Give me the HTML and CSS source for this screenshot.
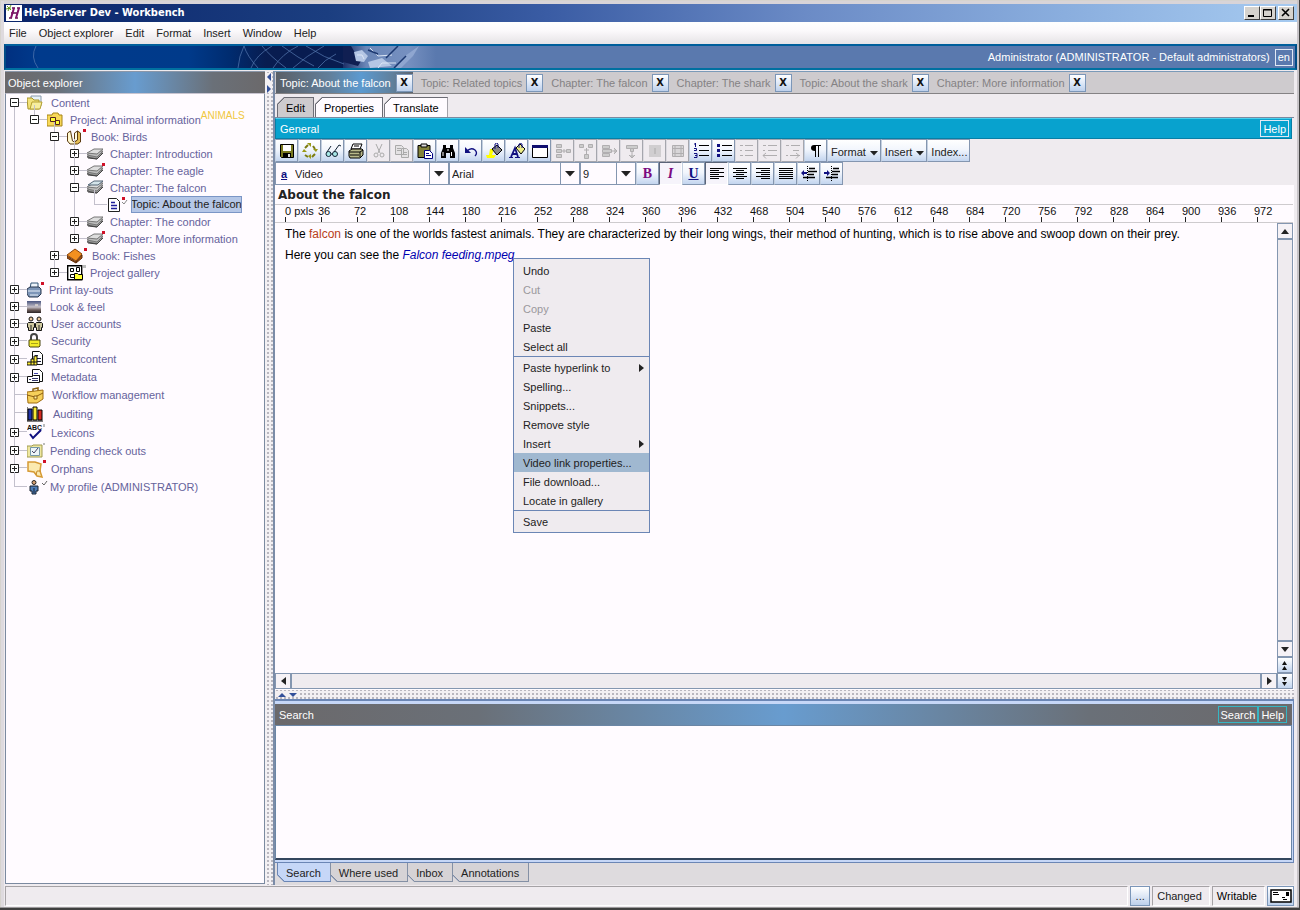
FILE: index.html
```html
<!DOCTYPE html>
<html lang="en">
<head>
<meta charset="utf-8">
<title>HelpServer Dev - Workbench</title>
<link rel="stylesheet" href="styles.css">
</head>
<body>
<svg class="defs" width="0" height="0" aria-hidden="true">
  <symbol id="plus" viewBox="0 0 9 9"><path d="M.5.5h8v8h-8z" fill="#fff" stroke="#222"/><path d="M2 4.5h5M4.5 2v5" stroke="#222"/></symbol>
  <symbol id="minus" viewBox="0 0 9 9"><path d="M.5.5h8v8h-8z" fill="#fff" stroke="#222"/><path d="M2 4.5h5" stroke="#222"/></symbol>
  <symbol id="chapter" viewBox="0 0 23 16"><path d="M0 11l6-4h10l-6 6z" fill="#999" stroke="#555"/><path d="M0 9l6-4h10l-6 6z" fill="#bbb" stroke="#777"/><path d="M0 7l7-4h9l-6 5z" fill="#ddd" stroke="#777"/><path d="M1 12l9 1 6-6" fill="none" stroke="#444"/></symbol>
  <symbol id="down" viewBox="0 0 10 6"><path d="M0 0h10L5 5.500z" fill="#222"/></symbol>
</svg>
<div class="window">
  <header class="titlebar">
    <svg width="16" height="16" viewBox="0 0 16 16"><path d="M0 0h16v16H0z" fill="#fff"/><path d="M1 1l4 4M5 0L2 6M0 4l5-1" stroke="#6a9a20"/><path d="M6 3h3M11 3h3M3 13h3M9 13h3M5 8h6" stroke="#601050" stroke-width="1.500"/><path d="M8 3L5 13M13 3l-3 10" stroke="#80106a" stroke-width="2"/></svg>
    <h1>HelpServer Dev - Workbench</h1>
    <div class="winbtns">
      <button aria-label="Minimize"><svg width="12" height="10"><path d="M2 8h6" stroke="#000" stroke-width="2"/></svg></button>
      <button aria-label="Maximize"><svg width="12" height="10"><path d="M1.500 1.500h8v7h-8zM1 2h9" fill="none" stroke="#000"/></svg></button>
      <button aria-label="Close" class="gap"><svg width="12" height="10"><path d="M2 1l7 7M9 1L2 8" stroke="#000" stroke-width="1.600"/></svg></button>
    </div>
  </header>
  <nav class="menubar">
    <button>File</button><button>Object explorer</button><button>Edit</button><button>Format</button><button>Insert</button><button>Window</button><button>Help</button>
  </nav>
  <div class="banner">
    <svg class="art" width="430" height="22" viewBox="0 0 430 22" aria-hidden="true">
      <defs>
        <linearGradient id="bg"><stop offset="0" stop-color="#003080"/><stop offset=".1" stop-color="#003a8c"/><stop offset=".54" stop-color="#003a8a"/><stop offset=".66" stop-color="#002c70"/><stop offset=".77" stop-color="#081c50"/></linearGradient>
        <linearGradient id="hand"><stop offset="0" stop-color="#1c2f66"/><stop offset=".25" stop-color="#6b87b8"/><stop offset=".7" stop-color="#7690c0"/><stop offset="1" stop-color="#5a79ae"/></linearGradient>
      </defs>
      <path d="M0 0h338v22H0z" fill="url(#bg)"/>
      <path d="M337 0h93v22h-93z" fill="url(#hand)"/>
      <path d="M30 0q-6 11 2 22M238 0q-5 10-6 22M266 0q-16 9-21 22M292 0q-16 8-25 22M318 0q-18 10-31 22M330 8q-12 6-18 14M238 0q3 10 14 22M256 0q8 10 24 22M276 0q16 12 32 20M300 0q18 12 38 18" fill="none" stroke="#5579b0" stroke-opacity=".7"/>
      <path d="M337 0h8l6 10 4 5-3 5-15-4z" fill="#101f52"/>
      <path d="M348 6l8-2 6 6-4 6-8-1zM362 16l14-4 10 8-22 2z" fill="#b4c6e4"/>
      <path d="M351 9l5 0 2 4M364 2l8 8 14-1M372 22l4-5 14 0" fill="none" stroke="#dce6f5"/>
      <path d="M389 22l10-12 14-10-6 10-12 12z" fill="#8fa6d0"/>
      <path d="M380 12l12-12M388 22l12-12M362 4l10 4" fill="none" stroke="#1c3870" stroke-width="1.500"/>
    </svg>
    <span class="who">Administrator (ADMINISTRATOR - Default administrators)</span>
    <button class="boxed">en</button>
  </div>
  <main class="main">
    <section class="explorer">
      <h2 class="shine">Object explorer</h2>
      <div class="treebox">
      <ul class="tree">
        <li><div class="row"><svg class="tg"><use href="#minus"/></svg><svg width="24" height="16"><path d="M4 1h10v10H4z" fill="#e8f2fa" stroke="#89a"/><path d="M0 3h5l2 2h5v9H1z" fill="#f3e27a" stroke="#a8952c"/><path d="M3 14l2-7h10l-2 7z" fill="#f7ee9e" stroke="#b5a030"/></svg><span>Content</span></div>
        <ul>
          <li><div class="row"><svg class="tg"><use href="#minus"/></svg><svg width="23" height="16"><path d="M0 3h5l1-2h5l1 2h3v11H0z" fill="#f8d858" stroke="#a68418"/><path d="M3.500 5.500h5v4h-5zM8.500 8.500h4v4h-4z" fill="#ff3" stroke="#522"/></svg><span>Project: Animal information</span><sup>ANIMALS</sup></div>
          <ul>
            <li><div class="row"><svg class="tg"><use href="#minus"/></svg><svg width="24" height="16"><path d="M.500 4l3-2 2 10 2 1v2H3L.500 12z" fill="#fff8d0" stroke="#5a3a10"/><path d="M7.500 13V4l3-2v9z" fill="#fffbe4" stroke="#5a3a10"/><path d="M10.500 2l3 2v9l-3 2h-3v-2l3-2z" fill="#e6bf55" stroke="#5a3a10"/><path d="M16 0h3v3h-3z" fill="#d01028"/></svg><span>Book: Birds</span></div>
            <ul>
              <li><div class="row"><svg class="tg"><use href="#plus"/></svg><svg width="23" height="16"><use href="#chapter"/></svg><span>Chapter: Introduction</span></div></li>
              <li><div class="row"><svg class="tg"><use href="#plus"/></svg><svg width="23" height="16"><use href="#chapter"/><path d="M15 0h3v3h-3z" fill="#d01028"/></svg><span>Chapter: The eagle</span></div></li>
              <li><div class="row"><svg class="tg"><use href="#minus"/></svg><svg width="23" height="16"><use href="#chapter"/><path d="M1 5l6-4h9l-5 4z" fill="#d4e4ea" stroke="#567"/></svg><span>Chapter: The falcon</span></div>
              <ul>
                <li><div class="row leaf"><svg width="23" height="16"><path d="M.500 1.500h8l3 3v10h-11z" fill="#fff" stroke="#222"/><path d="M3 5.500h4M3 8.500h6M3 11.500h6" stroke="#20209a" stroke-width="1.500"/><path d="M14 0h3v3h-3z" fill="#d01028"/><path d="M14 5l2 2 3-4" fill="none" stroke="#888"/></svg><span class="sel">Topic: About the falcon</span></div></li>
              </ul></li>
              <li><div class="row"><svg class="tg"><use href="#plus"/></svg><svg width="23" height="16"><use href="#chapter"/></svg><span>Chapter: The condor</span></div></li>
              <li><div class="row"><svg class="tg"><use href="#plus"/></svg><svg width="23" height="16"><use href="#chapter"/><path d="M15 0h3v3h-3z" fill="#d01028"/></svg><span>Chapter: More information</span></div></li>
            </ul></li>
            <li><div class="row"><svg class="tg"><use href="#plus"/></svg><svg width="25" height="16"><path d="M0 7l8-6 7 5-6 7z" fill="#f49020" stroke="#8a4208"/><path d="M0 8l9 6 6-7v3l-6 5-9-5z" fill="#b85408" stroke="#5a2a06"/><path d="M17 0h3v3h-3z" fill="#d01028"/></svg><span>Book: Fishes</span></div></li>
            <li><div class="row"><svg class="tg"><use href="#plus"/></svg><svg width="23" height="16"><path d="M.700.700h14v14h-14z" fill="#fff" stroke="#000" stroke-width="1.400"/><path d="M3.500 3.500h3v3h-3zM3.500 9.500h4v3h-4zM9.500 2.500h3v4h-3z" fill="#fff" stroke="#000"/><path d="M7.500 8.500h3l1 1h4v5h-8z" fill="#ff3" stroke="#000"/><path d="M16 0h3v3h-3z" fill="#bbb"/></svg><span>Project gallery</span></div></li>
          </ul></li>
        </ul></li>
        <li><div class="row"><svg class="tg"><use href="#plus"/></svg><svg width="22" height="16"><path d="M4 1h7v6H3z" fill="#eef4fb" stroke="#357"/><path d="M0 7l3-2h9l2 2v5l-3 3H2l-2-3z" fill="#7d95b8" stroke="#2a3850"/><path d="M1 9h12M3 13h8" stroke="#e8eef8"/><path d="M14 0h3v3h-3z" fill="#d01028"/></svg><span>Print lay-outs</span></div></li>
        <li><div class="row"><svg class="tg"><use href="#plus"/></svg><svg width="23" height="14"><defs><linearGradient id="sky" x2="0" y2="1"><stop offset="0" stop-color="#4a5580"/><stop offset=".5" stop-color="#c6c0c8"/><stop offset=".75" stop-color="#6a5a58"/><stop offset="1" stop-color="#2a2226"/></linearGradient></defs><path d="M0 1h14v12H0z" fill="url(#sky)"/><path d="M8 5h3" stroke="#fff3dd"/></svg><span>Look &amp; feel</span></div></li>
        <li><div class="row"><svg class="tg"><use href="#plus"/></svg><svg width="24" height="16"><g stroke="#111"><circle cx="4" cy="3" r="2" fill="#eec9a0"/><circle cx="12" cy="3" r="2" fill="#eec9a0"/><path d="M1.500 6.500h5l1 1v4h-1v3h-5v-3h-1v-4zM9.500 6.500h5l1 1v4h-1v3h-5v-3h-1v-4z" fill="#d0c8a0"/></g><path d="M4 9v6M12 9v6" stroke="#222"/></svg><span>User accounts</span></div></li>
        <li><div class="row r18"><svg class="tg"><use href="#plus"/></svg><svg width="24" height="16"><path d="M4 8V4q0-3 3-3t3 3v4" fill="none" stroke="#444" stroke-width="2"/><path d="M2 7h11v6l-1 1H3l-1-1z" fill="#f4ec28" stroke="#4a4610"/><path d="M4 10.500h7" stroke="#a8a018"/></svg><span>Security</span></div></li>
        <li><div class="row r18"><svg class="tg"><use href="#plus"/></svg><svg width="24" height="16"><path d="M5.500.500h7l3 3v10h-10z" fill="#fff" stroke="#111"/><path d="M8 4.500h3M8 7.500h6M10 10.500h4" stroke="#224"/><path d="M0 11h4V8h3V5h3v9H0z" fill="#fe3" stroke="#111"/><path d="M4 11h6M7 8v6M4 11v3" stroke="#111"/></svg><span>Smartcontent</span></div></li>
        <li><div class="row r18"><svg class="tg"><use href="#plus"/></svg><svg width="24" height="16"><path d="M5.500.500h7l3 3v9h-10z" fill="#fff" stroke="#111"/><path d="M7 4.500h4M7 6.500h6" stroke="#44a"/><path d="M.500 7.500h5l1-1h6v7H.500z" fill="#fff" stroke="#111"/><path d="M2 10.500h2M5 9.500h6M5 11.500h6" stroke="#336"/></svg><span>Metadata</span></div></li>
        <li><div class="row r18 bare"><svg width="25" height="17"><path d="M6 5V2l5-1v3" fill="none" stroke="#8a6010" stroke-width="1.500"/><path d="M0 5l16-2v9l-6 4H1z" fill="#f6cf5a" stroke="#a06c10"/><path d="M0 8l8 2 8-4" fill="none" stroke="#8a5c10"/><path d="M7 9h3v3H7z" fill="#fff0a0" stroke="#8a5c10"/></svg><span>Workflow management</span></div></li>
        <li><div class="row r19 bare"><svg width="26" height="16"><path d="M1 3h4v11H1z" fill="#2233aa" stroke="#000"/><path d="M6 1h4v13H6z" fill="#f8e838" stroke="#000"/><path d="M11 4h4v10h-4z" fill="#d42a20" stroke="#000"/><path d="M0 1v14h16" fill="none" stroke="#000"/></svg><span>Auditing</span></div></li>
        <li><div class="row r19"><svg class="tg"><use href="#plus"/></svg><svg width="24" height="18" viewBox="0 0 24 18"><text x="0" y="6" class="abc">ABC</text><path d="M3 10l3 4 8-8" fill="none" stroke="#101080" stroke-width="2"/><path d="M16 0h2v3h-2z" fill="#bbb"/></svg><span>Lexicons</span></div></li>
        <li><div class="row"><svg class="tg"><use href="#plus"/></svg><svg width="23" height="16"><path d="M0 3h5l1-1h9v12H0z" fill="#efe7a0" stroke="#a09a50"/><path d="M3.500 4.500h9v8h-9z" fill="#eef4f8" stroke="#79a"/><path d="M5 8l2 2 4-5" fill="none" stroke="#446"/><path d="M16 0h2v2h-2z" fill="#bbb"/></svg><span>Pending check outs</span></div></li>
        <li><div class="row r19"><svg class="tg"><use href="#plus"/></svg><svg width="24" height="18"><path d="M1 2h7l6 2-1 7 2 6-5-1-3-4-6-1z" fill="#fbeab0" stroke="#d69a34" stroke-width="1.500"/><path d="M9 15l1-4 4 0" fill="none" stroke="#c88a28"/><path d="M16 0h3v3h-3z" fill="#d01028"/></svg><span>Orphans</span></div></li>
        <li><div class="row r18 bare"><svg width="23" height="16"><circle cx="7" cy="3.500" r="2" fill="#d9a070" stroke="#222"/><path d="M3 7h8v5H9v3H5v-3H3z" fill="#4d7db8" stroke="#16202e"/><path d="M7 9v5" stroke="#16202e"/><path d="M15 4l2 2 3-4" fill="none" stroke="#666"/></svg><span>My profile (ADMINISTRATOR)</span></div></li>
      </ul>
      </div>
    </section>
    <div class="vsplit"><svg width="6" height="20"><path d="M5 0v8L1 4z" fill="#33509a"/><path d="M1 12v8l4-4z" fill="#33509a"/></svg></div>
    <section class="work">
      <div class="doctabs">
        <div class="dt on"><span>Topic: About the falcon</span><button aria-label="Close tab">X</button></div>
        <div class="dt"><span>Topic: Related topics</span><button aria-label="Close tab">X</button></div>
        <div class="dt"><span>Chapter: The falcon</span><button aria-label="Close tab">X</button></div>
        <div class="dt"><span>Chapter: The shark</span><button aria-label="Close tab">X</button></div>
        <div class="dt"><span>Topic: About the shark</span><button aria-label="Close tab">X</button></div>
        <div class="dt"><span>Chapter: More information</span><button aria-label="Close tab">X</button></div>
      </div>
      <div class="subtabs"><button class="on">Edit</button><button>Properties</button><button>Translate</button></div>
      <div class="general"><h2>General</h2><button class="boxed">Help</button></div>
      <div class="toolbar">
        <button aria-label="Save"><svg class="i"><path d="M1.500 1.500h13v13h-12l-1-1z" fill="#7a7a20" stroke="#000"/><path d="M4 2h8v6H4z" fill="#fff"/><path d="M4 10h8v4H4z" fill="#000"/><path d="M9 11h2v3H9z" fill="#ddd"/></svg></button>
        <button aria-label="Refresh"><svg class="i"><g fill="none" stroke="#7c7c10" stroke-width="2"><path d="M3 5l3-3M11 3l2 3M13 11l-3 3M6 14l-3-2"/></g><path d="M5 0h4v4zM11 6h5l-2 3zM9 11v5l-3-3zM0 9l2-3 3 3z" fill="#9a9a18"/></svg></button>
        <button aria-label="Preview"><svg class="i"><g fill="#a8e8e8" stroke="#123"><circle cx="3.500" cy="11" r="2.500"/><circle cx="10" cy="11" r="2.500"/></g><path d="M2 9l4-6M9 9l5-7 2 1M6 11h2" fill="none" stroke="#123"/></svg></button>
        <button aria-label="Print"><svg class="i"><path d="M5 1h9l-2 5H3z" fill="#fff" stroke="#000"/><path d="M1 8l3-2h10l1 1v5l-3 3H2l-1-2z" fill="#b9b98a" stroke="#000"/><path d="M1 9h11l3-2M2 12h9M6 3h5M12 9v5" fill="none" stroke="#000"/></svg></button>
        <button disabled aria-label="Cut"><svg class="i"><path d="M5 1l4 9M11 1L7 10" stroke="#aaa"/><circle cx="5" cy="12" r="2" fill="none" stroke="#aaa"/><circle cx="11" cy="12" r="2" fill="none" stroke="#aaa"/></svg></button>
        <button disabled aria-label="Copy"><svg class="i"><path d="M1.500 2.500h6l2 2v7h-8zM7.500 5.500h5l2 2v7h-7z" fill="#e4e2e4" stroke="#aaa"/><path d="M3 5.500h4M3 7.500h4M9 9.500h4M9 11.500h4" stroke="#aaa"/></svg></button>
        <button aria-label="Paste"><svg class="i"><path d="M1 2.500h12v12H1z" fill="#82823c" stroke="#000"/><path d="M4 1h6v3H4z" fill="#ddd" stroke="#000"/><path d="M7.500 7.500h5l3 3v5h-8z" fill="#fff" stroke="#000080"/><path d="M9 10.500h3M9 12.500h5" stroke="#000080"/></svg></button>
        <button aria-label="Find"><svg class="i"><path d="M3 2h3v3h4V2h3v3l2 5v5h-5v-5H6v5H1v-5l2-5z" fill="#000"/><path d="M3 9v4M11.500 9v4M8 6v2" stroke="#fff"/></svg></button>
        <button aria-label="Undo"><svg class="i"><path d="M4 8q4-4 8-1 3 3 0 6" fill="none" stroke="#101080" stroke-width="1.300"/><path d="M2 4v6h6z" fill="#101080"/></svg></button>
        <button aria-label="Highlight"><svg class="i"><path d="M0 12h3l1-6h4l-2 6h4l-2 3H1z" fill="#ff0"/><path d="M6 6l5-4 5 5-5 5z" fill="#888" stroke="#000"/><path d="M9 6V1q2-2 3 0v4" fill="none" stroke="#101080"/></svg></button>
        <button aria-label="Font color"><svg class="i"><path d="M0 14.500h4M6 14.500h5" stroke="#101080"/><path d="M2 14L6 5l3 9M3 11h5" fill="none" stroke="#101080" stroke-width="1.800"/><path d="M7 5l4-4 5 5-4 5z" fill="#ee8" stroke="#000"/><path d="M10 5V1q2-1 3 0v4" fill="none" stroke="#101080"/></svg></button>
        <button aria-label="Table"><svg class="i"><path d="M.500 2.500h15v12H.500z" fill="#fff" stroke="#000"/><path d="M0 3.500h16" stroke="#101070" stroke-width="3"/></svg></button>
        <button disabled aria-label="Column left"><svg class="i"><path d="M1.500 1.500h5v3h-5zM1.500 6.500h5v3h-5zM1.500 11.500h5v3h-5zM11.500 6.500h4v3h-4zM7 8h4M9 6v4" fill="#ccc" stroke="#b0aeb0"/></svg></button>
        <button disabled aria-label="Row above"><svg class="i"><path d="M1.500 1.500h4v3h-4zM10.500 1.500h4v3h-4zM6.500 11.500h4v4h-4zM8.500 5v6M6 7h5" fill="#ccc" stroke="#b0aeb0"/></svg></button>
        <button disabled aria-label="Column right"><svg class="i"><path d="M1.500 2.500h7v3h-7zM1.500 6.500h9v3h-9zM1.500 10.500h7v3h-7zM10 8h6M13 5l3 3-3 3" fill="#ccc" stroke="#b0aeb0"/></svg></button>
        <button disabled aria-label="Row below"><svg class="i"><path d="M2.500 2.500h11v3h-11zM6.500 5.500h3v3h-3zM8 8v7M5 12l3 3 3-3" fill="#ccc" stroke="#b0aeb0"/></svg></button>
        <button disabled aria-label="Split"><svg class="i"><path d="M2 2h12v12H2z" fill="#d0ced0"/><path d="M8 5v6" stroke="#aaa"/></svg></button>
        <button disabled aria-label="Merge"><svg class="i"><path d="M2.500 2.500h11v11h-11zM2 5.500h12M2 10.500h12M5 2v12M11 2v12" fill="#d8d6d8" stroke="#b0aeb0"/></svg></button>
        <button aria-label="Numbered list"><svg class="i"><path d="M6 2.500h10M6 7.500h10M6 12.500h10" stroke="#000"/><path d="M2.500 0v4M1 1h2M1 5.500h2.500v2H1M1 10.500h3v4H1M2 12.500h2" fill="none" stroke="#101080"/></svg></button>
        <button aria-label="Bulleted list"><svg class="i"><path d="M6 2.500h10M6 7.500h10M6 12.500h10" stroke="#000"/><path d="M1 1h3v3H1zM1 6h3v3H1zM1 11h3v3H1z" fill="#101080"/></svg></button>
        <button disabled aria-label="List"><svg class="i"><path d="M6 2.500h8M6 7.500h8M6 12.500h8M1 2.500h3M1 7.500h2M1 12.500h3" stroke="#b0aeb0"/></svg></button>
        <button disabled aria-label="Outdent item"><svg class="i"><path d="M6 2.500h9M6 7.500h9M1 2.500h3M1 7.500h2M1 12.500h14M4 10l-3 2.500 3 3" fill="none" stroke="#b0aeb0"/></svg></button>
        <button disabled aria-label="Indent item"><svg class="i"><path d="M6 2.500h9M8 7.500h6M1 2.500h3M1 12.500h2M5 12.500h10M11 10l3 2.500-3 3" fill="none" stroke="#b0aeb0"/></svg></button>
        <button aria-label="Paragraph marks"><svg class="i"><path d="M13 2.500H6M7.500 2v12M10.500 2v12" fill="none" stroke="#000"/><path d="M8 2H6Q3 2 3 5t4 3h1z"/></svg></button>
        <button class="txt">Format<svg width="8" height="5"><path d="M0 0h8L4 4.500z" fill="#222"/></svg></button>
        <button class="txt">Insert<svg width="8" height="5"><path d="M0 0h8L4 4.500z" fill="#222"/></svg></button>
        <button class="txt">Index...</button>
      </div>
      <div class="toolbar">
        <div class="combo c1"><b>a</b><select aria-label="Style"><option>Video</option></select><i><svg width="10" height="6"><use href="#down"/></svg></i></div>
        <div class="combo c2"><select aria-label="Font"><option>Arial</option></select><i><svg width="10" height="6"><use href="#down"/></svg></i></div>
        <div class="combo c3"><select aria-label="Size"><option>9</option></select><i><svg width="10" height="6"><use href="#down"/></svg></i></div>
        <button class="ser b">B</button><button class="ser it on">I</button><button class="ser u">U</button>
        <button class="on" aria-label="Align left"><svg class="i"><path d="M1 2.500h14M1 4.500h9M1 6.500h14M1 8.500h9M1 10.500h14M1 12.500h9" stroke="#000"/></svg></button>
        <button aria-label="Center"><svg class="i"><path d="M1 2.500h14M4 4.500h8M1 6.500h14M4 8.500h8M1 10.500h14M4 12.500h8" stroke="#000"/></svg></button>
        <button aria-label="Align right"><svg class="i"><path d="M1 2.500h14M6 4.500h9M1 6.500h14M6 8.500h9M1 10.500h14M6 12.500h9" stroke="#000"/></svg></button>
        <button aria-label="Justify"><svg class="i"><path d="M1 2.500h14M1 4.500h14M1 6.500h14M1 8.500h14M1 10.500h14M1 12.500h14" stroke="#000"/></svg></button>
        <button aria-label="Outdent"><svg class="i"><path d="M8 2.500h6M7 5.500h9M7 8.500h6M2 11.500h12" stroke="#000" stroke-width="1.500"/><path d="M6.500 0v16" stroke="#000" stroke-dasharray="1 1"/><path d="M0 7l3-3v2h3v2H3v2z" fill="#101080"/></svg></button>
        <button aria-label="Indent"><svg class="i"><path d="M9 2.500h6M8 5.500h8M8 8.500h6M2 11.500h12" stroke="#000" stroke-width="1.500"/><path d="M7.500 0v16" stroke="#000" stroke-dasharray="1 1"/><path d="M6 7L3 4v2H0v2h3v2z" fill="#101080"/></svg></button>
      </div>
      <div class="editor">
        <h3>About the falcon</h3>
        <div class="ruler"><span>0 pxls</span><span>36</span><span>72</span><span>108</span><span>144</span><span>180</span><span>216</span><span>252</span><span>288</span><span>324</span><span>360</span><span>396</span><span>432</span><span>468</span><span>504</span><span>540</span><span>576</span><span>612</span><span>648</span><span>684</span><span>720</span><span>756</span><span>792</span><span>828</span><span>864</span><span>900</span><span>936</span><span>972</span></div>
        <div class="page">
          <article class="doc">
            <p>The <span class="term">falcon</span> is one of the worlds fastest animals. They are characterized by their long wings, their method of hunting, which is to rise above and swoop down on their prey.</p>
            <p>Here you can see the <a class="vid" href="#">Falcon feeding.mpeg</a></p>
          </article>
          <div class="vbar">
            <button aria-label="Scroll up"><svg width="8" height="5"><path d="M0 5h8L4 0z" fill="#222"/></svg></button>
            <span class="track"></span>
            <button aria-label="Scroll down"><svg width="8" height="5"><path d="M0 0h8L4 5z" fill="#222"/></svg></button>
            <button class="blue" aria-label="Page up"><svg width="8" height="9"><path d="M1 4h5L3.500 0zM1 9h5L3.500 5z" fill="#111"/></svg></button>
          </div>
        </div>
        <div class="hbar">
          <button aria-label="Scroll left"><svg width="5" height="8"><path d="M5 0v8L0 4z" fill="#222"/></svg></button>
          <span class="track"></span>
          <button aria-label="Scroll right"><svg width="5" height="8"><path d="M0 0v8l5-4z" fill="#222"/></svg></button>
          <button class="blue" aria-label="Page down"><svg width="8" height="9"><path d="M1 0h5L3.500 4zM1 5h5L3.500 9z" fill="#111"/></svg></button>
        </div>
      </div>
      <div class="hsplit"><svg width="24" height="5"><path d="M3 5h8L7 1z" fill="#33509a"/><path d="M14 1h8l-4 4z" fill="#33509a"/></svg></div>
      <div class="search">
        <div class="shine shead"><h2>Search</h2><button class="boxed">Search</button><button class="boxed">Help</button></div>
        <div class="results"></div>
      </div>
      <div class="bottomtabs"><button class="on">Search</button><button>Where used</button><button>Inbox</button><button>Annotations</button></div>
    </section>
  </main>
  <footer class="status">
    <span class="msg"></span><button class="dots">...</button><span class="cell">Changed</span><span class="cell dark">Writable</span>
    <button class="mail" aria-label="Messages"><svg width="22" height="14"><path d="M1 1h20v12H1z" fill="#fff" stroke="#000" stroke-width="1.500"/><path d="M3 3.500h5M3 5.500h6M12 8.500h3M13 10.500h4" stroke="#000"/><path d="M16 3h3v4h-3z"/></svg></button>
  </footer>
  <div class="ctx" role="menu">
    <button>Undo</button><button disabled>Cut</button><button disabled>Copy</button><button>Paste</button><button>Select all</button>
    <hr>
    <button>Paste hyperlink to<svg width="5" height="8"><path d="M0 0v8l5-4z" fill="#222"/></svg></button><button>Spelling...</button><button>Snippets...</button><button>Remove style</button><button>Insert<svg width="5" height="8"><path d="M0 0v8l5-4z" fill="#222"/></svg></button><button class="hot">Video link properties...</button><button>File download...</button><button>Locate in gallery</button>
    <hr>
    <button>Save</button>
  </div>
</div>
</body>
</html>
```

FILE: styles.css
```css
* { box-sizing: border-box; }
body { margin: 0; font: 11px/14px "Liberation Sans", Arial, sans-serif; color: #222; background: #efebef; }
button, select { font: inherit; color: inherit; margin: 0; padding: 0; border: 0; background: none; border-radius: 0; }
h1, h2, h3, p, ul { margin: 0; padding: 0; font-size: inherit; font-weight: normal; }
svg { display: block; flex: none; }
.defs { position: absolute; }

.window { position: relative; display: flex; flex-direction: column; height: 100vh; padding: 4px 3px 3px 4px; background: #efebef; box-shadow: inset -1px -2px #404040, inset 0 -3px #9a989a, inset -3px 0 #c8c4c8, inset 1px 0 #d6d3ce, inset 0 1px #d6d3ce, inset 4px 0 #dedade, inset 0 4px #d8d4d8; }

.titlebar { display: flex; align-items: center; gap: 2px; height: 18px; flex: none; padding: 0 3px 0 2px; background: linear-gradient(90deg, #0a246a, #1b3e80 25%, #3a5ca4 42%, #6b8bc6 62%, #8aaede 82%, #a6caf0); color: #fff; }
.titlebar h1 { flex: 1; font: bold 11px/16px "DejaVu Sans Condensed", Tahoma, sans-serif; }
.winbtns { display: flex; }
.winbtns button { display: grid; place-items: center; width: 16px; height: 14px; background: #d6d3ce; border: 1px solid; border-color: #fff #404040 #404040 #fff; }
.winbtns .gap { margin-left: 2px; }

.menubar { display: flex; gap: 12px; flex: none; height: 22px; padding: 0 5px; background: linear-gradient(#fff, #fbf9fb 40%, #e6e3e6); }

.banner { display: flex; align-items: center; gap: 5px; flex: none; height: 26px; padding: 0 2px 0 0; border: 2px solid #004c86; border-color: #005f9c #004c86 #0070a0; background: #5a79ae; color: #fff; }
.banner .art { align-self: stretch; height: 22px; }
.who { flex: 1; text-align: right; }
.boxed { height: 17px; padding: 0 2px; border: 1px solid #e0e8f4; color: #fff; line-height: 14px; }

.main { display: flex; flex: 1; min-height: 0; padding: 1px 3px 0 1px; }
.explorer { display: flex; flex-direction: column; width: 260px; flex: none; border-top: 1px solid #8a96a8; }
.shine { background: linear-gradient(90deg, #6b696b, #6a7078 20%, #689ccf 50%, #6a7078 80%, #6b696b); color: #fff; }
.explorer h2 { flex: none; height: 21px; padding: 4px 3px; }
.treebox { flex: 1; padding: 0 4px; background: #fffbff; border: 1px solid #7b8aa0; border-top-color: #c8c4d0; margin-bottom: 1px; }
.tree, .tree ul { list-style: none; }
.tree ul { padding-left: 20px; }
.tree li { position: relative; }
.tree li::before { content: ""; position: absolute; left: 4px; top: -6px; bottom: 0; width: 1px; background: #c3c0cc; }
.tree > li:first-child::before { top: 8px; }
.tree li:last-child::before { bottom: auto; height: 15px; }
.row { position: relative; display: flex; align-items: center; height: 17px; white-space: nowrap; color: #66639c; }
.r18 { height: 18px; }
.r19 { height: 19px; }
.row::before { content: ""; position: absolute; left: 5px; top: 8px; width: 12px; height: 1px; background: #c3c0cc; }
.tg { width: 9px; height: 9px; margin-right: 8px; position: relative; }
.bare { padding-left: 17px; }
.leaf { padding-left: 18px; }
.row sup { align-self: flex-start; font-size: 10px; line-height: 10px; color: #f0c840; }
.sel { height: 17px; outline: 1px solid #7b96c6; outline-offset: -1px; background: #b5c7e7; color: #222; line-height: 17px; }
.abc { font: bold 7px "Liberation Sans", sans-serif; fill: #111; }

.vsplit { width: 8px; flex: none; padding: 2px 1px; background: radial-gradient(circle at 2px 2px, #a4a2ac 0.6px, #f3f0f3 1px) 1px 0 / 4px 4px; }
.vsplit svg { background: #f3f0f3; }
.work { display: flex; flex-direction: column; flex: 1; min-width: 0; border-left: 2px solid #7b8ca8; border-top: 1px solid #7b9ab8; }

.doctabs { display: flex; align-items: center; flex: none; height: 22px; padding-left: 1px; gap: 8px; background: #cecbce; border-bottom: 1px solid #848284; color: #848284; overflow: hidden; white-space: nowrap; }
.dt { display: flex; align-items: center; gap: 4px; height: 21px; }
.dt button { width: 17px; height: 18px; border: 1px solid #7b96b8; background: linear-gradient(#fff, #dfe9f8 50%, #bdd0ec); color: #111; font: bold 11px/14px "DejaVu Sans Condensed", sans-serif; }
.dt.on { gap: 5px; padding-left: 4px; background: linear-gradient(90deg, #5a6068, #62809c 40%, #5c9ad0 62%, #60809c 85%, #5c646e); color: #fff; }

.subtabs { display: flex; align-items: flex-end; gap: 1px; flex: none; height: 24px; padding: 0 2px; border-bottom: 1px solid #7b8aa0; }
.subtabs button { height: 20px; padding: 0 8px; border: 1px solid #6b6b73; border-bottom: 0; color: #000; clip-path: polygon(7px 0, 100% 0, 100% 100%, 0 100%, 0 7px); background: linear-gradient(135deg, #6b6b73 6px, #fffbff 6px) border-box; }
.subtabs .on { background: linear-gradient(135deg, #6b6b73 6px, #cecbce 6px) border-box; }

.general { display: flex; align-items: center; flex: none; height: 21px; margin-right: 2px; padding: 0 2px 0 4px; background: #08a2ce; border: 1px solid #087fa6; border-top-color: #4ad0ee; color: #fff; }
.general h2 { flex: 1; }

.toolbar { display: flex; flex: none; height: 23px; }
.toolbar button { display: grid; place-items: center; width: 23px; height: 23px; border: 1px solid #8496b0; border-left-color: #c4d0e0; background: linear-gradient(#fff, #f2f6fd 45%, #c3d5ef); }
.toolbar button:disabled { background: #efebef; border-color: #a5a6ad; border-left-color: #dcdae0; }
.toolbar .on { background: #f6f4fb; border-color: #5a6478 #fff #fff #5a6478; }
.toolbar .i { width: 16px; height: 16px; }
.toolbar .txt { display: flex; align-items: center; width: auto; padding: 2px 2px 0 3px; gap: 4px; }
.toolbar .txt svg { margin-top: 4px; }
.toolbar .ser { font: bold 14px/18px "Liberation Serif", serif; color: #7a0a80; }
.toolbar .it { font-style: italic; }
.toolbar .u { color: #101080; text-decoration: underline; }
.combo { display: flex; align-items: center; height: 23px; border: 1px solid #8496b0; background: #fffbff; }
.combo b { width: 17px; padding-left: 5px; color: #101080; text-decoration: underline; }
.combo select { flex: 1; min-width: 0; height: 21px; appearance: none; padding: 0 2px; }
.combo i { display: grid; place-items: center; width: 19px; height: 21px; border-left: 1px solid #8496b0; }
.c1 { width: 174px; }
.c2 { width: 131px; }
.c3 { width: 56px; }

.editor { display: flex; flex-direction: column; flex: 1; min-height: 0; background: #fffbff; padding-right: 1px; }
.editor h3 { flex: none; height: 19px; padding: 1px 3px; font: bold 12px/18px "DejaVu Sans", Verdana, sans-serif; }
.ruler { display: flex; flex: none; height: 19px; padding-left: 10px; border: 1px solid #cecbce; border-width: 1px 0; line-height: 12px; color: #111; overflow: hidden; }
.ruler span { position: relative; flex: none; width: 36px; text-indent: -3px; white-space: nowrap; }
.ruler span:first-child { text-indent: 0; }
.ruler span::after { content: ""; position: absolute; left: 0; bottom: 0; width: 1px; height: 5px; background: #222; }
.page { display: flex; flex: 1; min-height: 0; }
.doc { flex: 1; padding: 4px 10px; font-size: 12px; color: #000; white-space: nowrap; overflow: hidden; }
.doc p { margin-bottom: 7px; }
.term { color: #b84020; }
.vid { color: #0000b0; font-style: italic; text-decoration: none; }
.vbar { display: flex; flex-direction: column; width: 16px; flex: none; }
.vbar button, .hbar button { display: grid; place-items: center; width: 16px; height: 16px; border: 1px solid #8496b0; background: #f6f2f6; flex: none; }
.vbar .blue, .hbar .blue { background: linear-gradient(#fff, #c3d5ef); }
.track { flex: 1; background: #efebef; border: 1px solid #8496b0; }
.hbar { display: flex; flex: none; height: 17px; }
.hbar .track { height: 16px; }
.hsplit { flex: none; height: 9px; padding: 2px 0; background: radial-gradient(circle at 2px 2px, #a4a2ac 0.6px, #f3f0f3 1px) 0 2px / 4px 4px; }
.hsplit svg { background: #f3f0f3; }

.search { display: flex; flex-direction: column; flex: none; height: 164px; padding: 3px 1px 2px 0; border: 1px solid #6b86b5; border-left: 0; border-top-width: 2px; background: #c6d7f7; }
.shead { display: flex; align-items: center; flex: none; height: 21px; padding: 0 5px 0 4px; }
.shead h2 { flex: 1; }
.shead .boxed { border-color: #35b6c4; }
.results { flex: 1; background: #fffbff; border: 1px solid #6b86a5; border-bottom: 2px solid #34465e; }
.bottomtabs { display: flex; flex: none; height: 22px; background: #dedbde; padding-left: 2px; }
.bottomtabs button { height: 19px; padding: 1px 9px 0 8px; border: 1px solid #8490a5; border-top: 0; clip-path: polygon(0 0, 100% 0, 100% 100%, 7px 100%, 0 12px); background: linear-gradient(45deg, #7b8aa5 6px, #d6d3d6 6px) border-box; margin-right: -1px; }
.bottomtabs .on { background: linear-gradient(45deg, #6b86b5 6px, #c6d7f7 6px) border-box; border-color: #6b86b5; }

.status { display: flex; flex: none; gap: 2px; height: 22px; padding: 1px 3px 1px 1px; }
.msg { flex: 1; border: 1px solid #a5a2a5; border-right-color: #fff; border-bottom-color: #fff; }
.dots { width: 20px; border: 1px solid #7b96b8; background: linear-gradient(#fff, #bdd0ec); }
.cell { padding: 2px 7px 0 4px; border: 1px solid #a5a2a5; border-right-color: #fff; border-bottom-color: #fff; }
.dark { color: #000; }
.mail { display: grid; place-items: center; width: 27px; border: 1px solid #7b96b8; background: linear-gradient(#fff, #bdd0ec); }

.ctx { position: absolute; left: 513px; top: 258px; width: 137px; padding: 2px 0 1px; border: 1px solid #6b86b5; background: #efebef; }
.ctx button { display: flex; align-items: center; justify-content: space-between; width: 100%; height: 19px; padding: 0 5px 0 9px; }
.ctx button:disabled { color: #9a989c; }
.ctx hr { margin: 0 0 1px; border: 0; border-top: 1px solid #6b86b5; }
.ctx .hot { background: #a0b8d0; }
```
